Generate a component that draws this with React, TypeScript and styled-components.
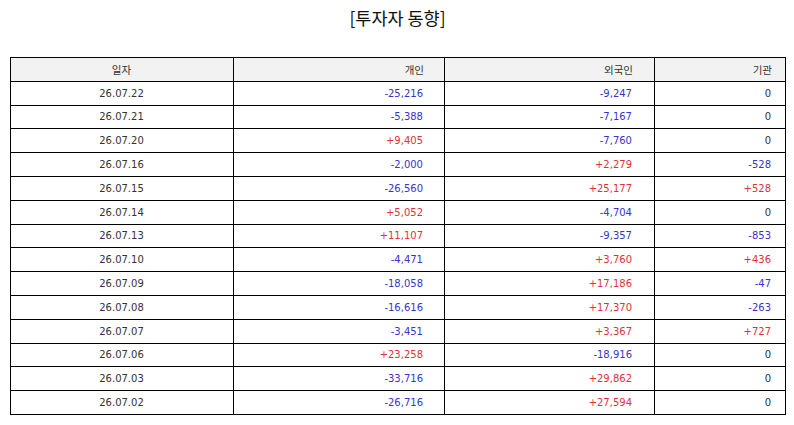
import React from "react";
import styled, { createGlobalStyle } from "styled-components";

const Global = createGlobalStyle`
  html, body { margin: 0; padding: 0; background: #fff; }
  body { font-family: "DejaVu Sans", "Noto Sans CJK KR", sans-serif; color: #333; }
`;

const Page = styled.div`
  width: 794px;
  padding: 6px 9px 0 10px;
  box-sizing: border-box;
`;

const Title = styled.h1`
  margin: 0 0 27px;
  text-align: center;
  font-family: "Noto Sans CJK KR", sans-serif;
  font-size: 17.5px;
  font-weight: 400;
  line-height: 24px;
  color: #111;
`;

const Table = styled.table`
  width: 775px;
  border-collapse: collapse;
  table-layout: fixed;
  font-size: 10px;
`;

const Th = styled.th<{ $align?: string; $pr?: number }>`
  background: #f2f2f2;
  border: 1px solid #000;
  height: 22.8px;
  padding: 0 ${(p) => p.$pr ?? 13}px 0 12px;
  font-family: "Noto Sans CJK KR", sans-serif;
  font-size: 10.5px;
  font-weight: 400;
  text-align: ${(p) => p.$align || "right"};
  color: #333;
`;

const Td = styled.td<{ $align?: string; $tone?: "up" | "down" | "flat"; $pr?: number }>`
  border: 1px solid #000;
  height: 22.8px;
  padding: 0 ${(p) => p.$pr ?? 13}px 0 12px;
  text-align: ${(p) => p.$align || "right"};
  color: ${(p) => (p.$tone === "up" ? "#e0303a" : p.$tone === "down" ? "#3535c8" : "#333")};
`;

const rows: [string, string, string, string][] = [
  ["26.07.22", "-25,216", "-9,247", "0"],
  ["26.07.21", "-5,388", "-7,167", "0"],
  ["26.07.20", "+9,405", "-7,760", "0"],
  ["26.07.16", "-2,000", "+2,279", "-528"],
  ["26.07.15", "-26,560", "+25,177", "+528"],
  ["26.07.14", "+5,052", "-4,704", "0"],
  ["26.07.13", "+11,107", "-9,357", "-853"],
  ["26.07.10", "-4,471", "+3,760", "+436"],
  ["26.07.09", "-18,058", "+17,186", "-47"],
  ["26.07.08", "-16,616", "+17,370", "-263"],
  ["26.07.07", "-3,451", "+3,367", "+727"],
  ["26.07.06", "+23,258", "-18,916", "0"],
  ["26.07.03", "-33,716", "+29,862", "0"],
  ["26.07.02", "-26,716", "+27,594", "0"],
];

const tone = (v: string) => (v.startsWith("+") ? "up" : v.startsWith("-") ? "down" : "flat");

export default function App() {
  return (
    <>
      <Global />
      <Page>
        <Title>[투자자 동향]</Title>
        <Table>
          <colgroup>
            <col style={{ width: 223 }} />
            <col style={{ width: 211 }} />
            <col style={{ width: 210 }} />
            <col style={{ width: 131 }} />
          </colgroup>
          <thead>
            <tr>
              <Th $align="center">일자</Th>
              <Th $pr={20}>개인</Th>
              <Th $pr={21}>외국인</Th>
              <Th $pr={13}>기관</Th>
            </tr>
          </thead>
          <tbody>
            {rows.map((r) => (
              <tr key={r[0]}>
                <Td $align="center">{r[0]}</Td>
                <Td $pr={21} $tone={tone(r[1])}>{r[1]}</Td>
                <Td $pr={22} $tone={tone(r[2])}>{r[2]}</Td>
                <Td $pr={14} $tone={tone(r[3])}>{r[3]}</Td>
              </tr>
            ))}
          </tbody>
        </Table>
      </Page>
    </>
  );
}
